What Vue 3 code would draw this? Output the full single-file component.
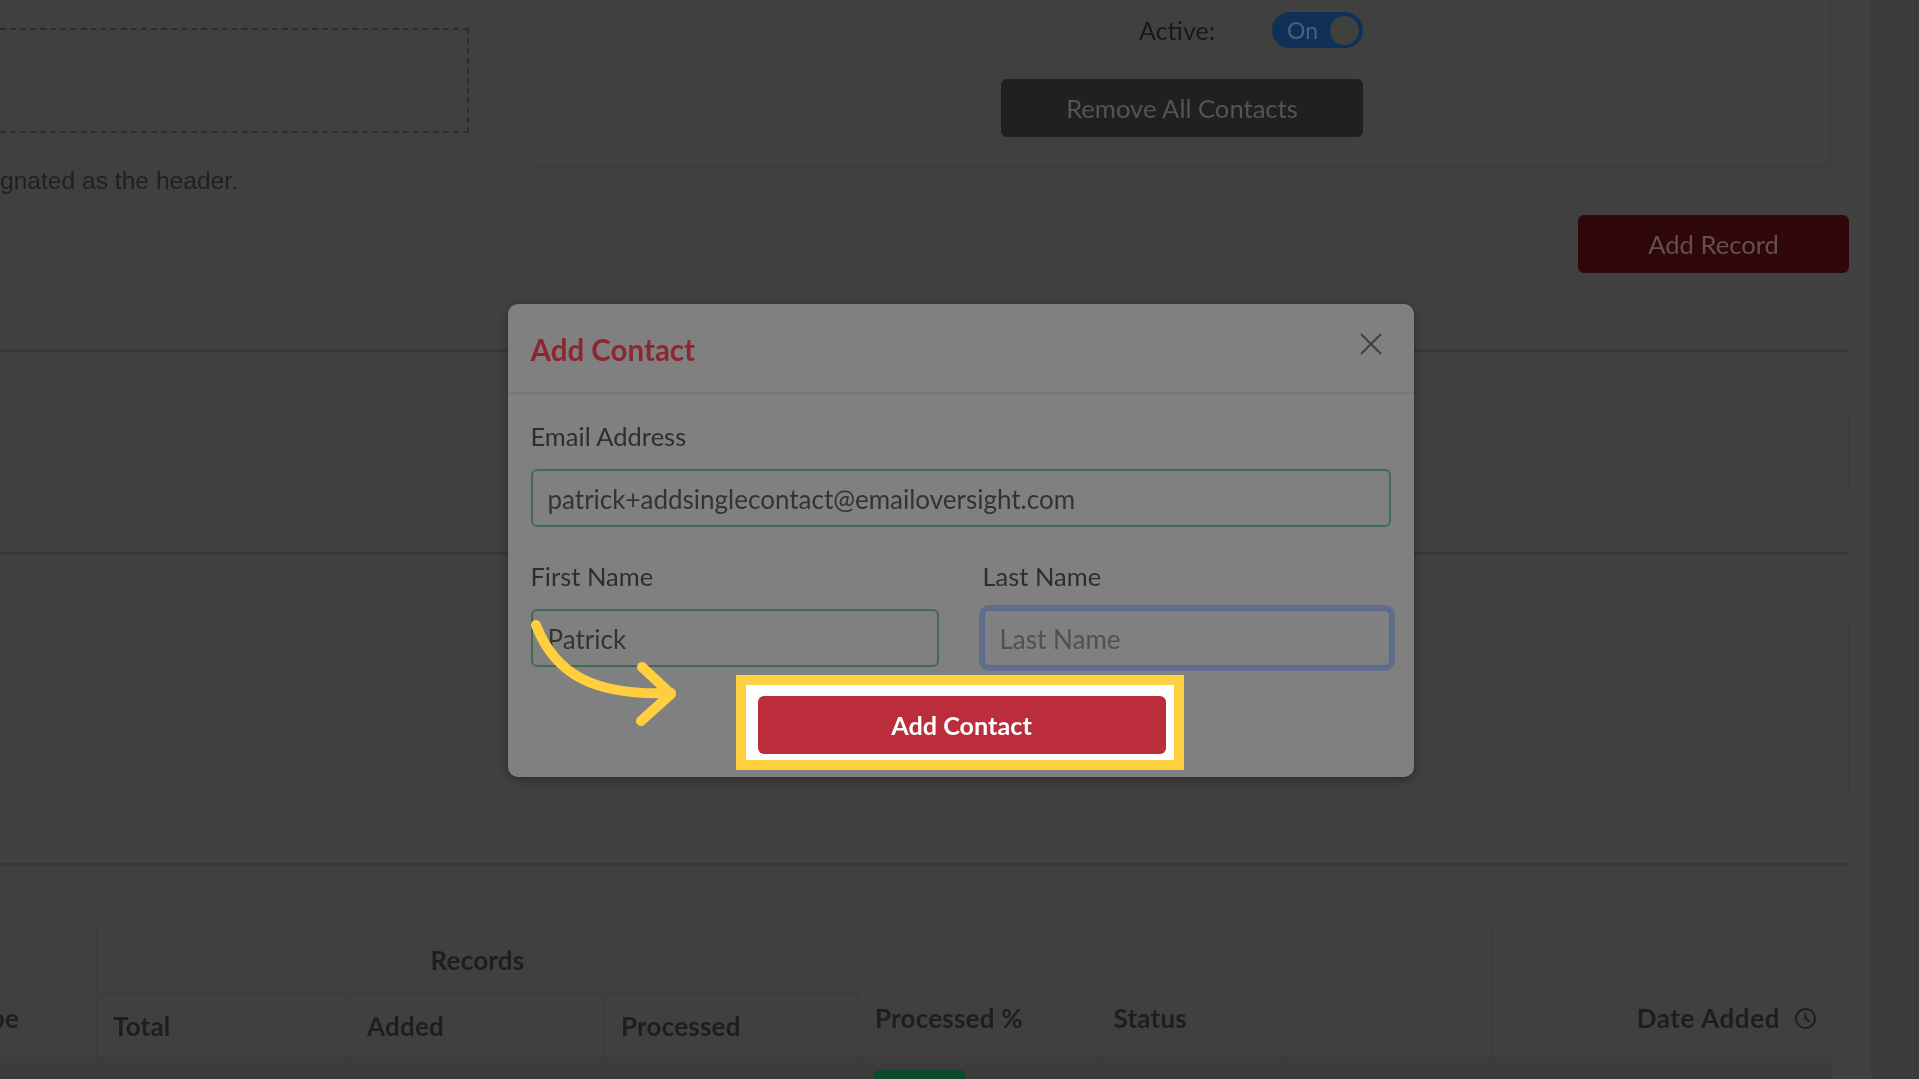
<script setup>
const subHeads = [
  { label: 'Total', col: 'c2' },
  { label: 'Added', col: 'c3' },
  { label: 'Processed', col: 'c4' },
]
</script>

<template>
  <div class="app">
    <div class="main soft">
      <section class="top">
        <div class="left">
          <div class="drop"></div>
          <p class="hint">gnated as the header.</p>
        </div>
        <div class="outer">
          <div class="inner">
            <div class="active">
              <span class="active-label">Active:</span>
              <span class="toggle"><span>On</span><i></i></span>
            </div>
            <button class="remove">Remove All Contacts</button>
          </div>
        </div>
      </section>
      <div class="actions"><button class="add-record">Add Record</button></div>
      <hr class="rule first" />
      <div class="box short"></div>
      <hr class="rule second" />
      <div class="box tall"></div>
      <hr class="rule third" />
      <div class="thead">
        <div class="th span c1 type">pe</div>
        <div class="th records">Records</div>
        <div v-for="h in subHeads" :key="h.label" class="th sub" :class="h.col">{{ h.label }}</div>
        <div class="th span c5">Processed %</div>
        <div class="th span c6">Status</div>
        <div class="th span c7"></div>
        <div class="th span c8 date">
          Date Added
          <svg class="clock" viewBox="0 0 24 24" width="23" height="23" fill="none" stroke="#1c1e20" stroke-width="2">
            <circle cx="12" cy="12" r="10" />
            <path d="M12 6v6l4 3" />
          </svg>
        </div>
      </div>
      <div class="row"><span class="badge"></span></div>
    </div>
    <aside class="strip"></aside>

    <div class="overlay">
      <div class="modal">
        <header class="modal-head soft">
          <h2>Add Contact</h2>
          <svg class="close" viewBox="0 0 24 24" width="24" height="24" fill="none" stroke="#404040" stroke-width="2">
            <path d="M2 2l20 20M22 2L2 22" />
          </svg>
        </header>
        <div class="modal-body soft">
          <label class="field">
            <span>Email Address</span>
            <div class="input ok">patrick+addsinglecontact@emailoversight.com</div>
          </label>
          <div class="two">
            <label class="field">
              <span>First Name</span>
              <div class="input ok">Patrick</div>
            </label>
            <label class="field">
              <span>Last Name</span>
              <div class="input focus">Last Name</div>
            </label>
          </div>
        </div>
        <div class="frame">
          <button class="submit soft">Add Contact</button>
        </div>
      </div>
      <svg class="arrow" viewBox="0 0 300 200" width="300" height="200" fill="none" stroke="#ffcf3f" stroke-width="10" stroke-linecap="round" stroke-linejoin="round">
        <path d="M26 35C45 85 85 106 161 103" />
        <path d="M132 77L161 104L131 131" />
      </svg>
    </div>
  </div>
</template>

<style scoped>
.app {
  position: relative;
  display: flex;
  width: 1919px;
  height: 1079px;
  overflow: hidden;
  background: #404040;
  font-family: Lato, "Noto Sans", sans-serif;
  color: #1c1e20;
}
.soft { filter: blur(0.6px); }
.main { width: 1849px; flex: none; margin-right: 22px; }
.strip { flex: 1; background: #3b3b3b; }

.top { display: flex; height: 185px; }
.left { width: 514px; flex: none; padding-top: 28px; box-sizing: border-box; }
.drop {
  width: 469px;
  height: 105px;
  box-sizing: border-box;
  border: 2px dashed #2d2d2d;
  border-left: none;
}
.hint {
  width: 237px;
  margin: 33px 0 0;
  font: 24.6px/30px "Liberation Sans", sans-serif;
  white-space: nowrap;
  text-align: right;
  color: #202020;
}
.outer {
  flex: 1;
  box-sizing: border-box;
  padding: 0 16px 17px 17px;
  border: 1px solid #3c3c3c;
  border-top: none;
  border-radius: 0 0 6px 6px;
}
.inner {
  height: 168px;
  box-sizing: border-box;
  padding: 12px 467px 0 0;
  display: flex;
  flex-direction: column;
  align-items: flex-end;
  border: 2px solid #3b3e3c;
  border-top: none;
  border-radius: 0 0 6px 6px;
}
.active { display: flex; align-items: center; gap: 57px; }
.active-label { font-size: 25px; color: #16181a; }
.toggle {
  display: flex;
  align-items: center;
  justify-content: space-between;
  box-sizing: border-box;
  width: 91px;
  height: 36px;
  padding: 0 4px 0 15px;
  border-radius: 18px;
  background: #0f3158;
  font-size: 23px;
  color: #4a5f78;
}
.toggle i { width: 29px; height: 29px; border-radius: 50%; background: #404040; }
.remove, .add-record, .submit {
  border: none;
  font-family: inherit;
  font-size: 25.6px;
  border-radius: 6px;
}
.remove {
  width: 362px;
  height: 58px;
  margin-top: 31px;
  background: #1e2022;
  color: #545454;
}
.actions { display: flex; justify-content: flex-end; margin-top: 30px; }
.add-record { width: 271px; height: 58px; background: #300809; color: #645050; }

.rule { height: 3px; margin: 0; border: none; background: #383838; }
.first { margin-top: 76px; }
.second { margin-top: 64px; }
.third { margin-top: 65px; }
.box { box-sizing: border-box; border: 1px solid #3b3b3b; border-left: none; }
.short { height: 73px; margin-top: 63px; }
.tall { height: 180px; margin-top: 63px; }

.thead {
  display: grid;
  grid-template-columns: 97px 254px 254px 254px 238.6px 184.4px 211px 356px;
  grid-template-rows: 68px 62px;
  margin-top: 61px;
  font-size: 26px;
  font-weight: 700;
  letter-spacing: 0.2px;
}
.th { display: flex; align-items: center; padding: 0 16px; border-right: 1px solid #3b3b3b; line-height: 30px; box-sizing: border-box; min-width: 0; }
.span { grid-row: 1 / 3; align-items: flex-end; padding-bottom: 24px; }
.type { justify-content: flex-end; padding: 0 77px 24px 0; white-space: nowrap; }
.records { grid-column: 2 / 5; grid-row: 1; justify-content: center; border-bottom: 2px solid #3c3c3c; }
.sub { grid-row: 2; }
.c1 { grid-column: 1; }
.c2 { grid-column: 2; }
.c3 { grid-column: 3; }
.c4 { grid-column: 4; }
.c5 { grid-column: 5; }
.c6 { grid-column: 6; }
.c7 { grid-column: 7; }
.c8 { grid-column: 8; }
.date { justify-content: flex-end; gap: 14px; padding-right: 32px; border-right: none; white-space: nowrap; letter-spacing: 0.6px; }
.clock { flex: none; margin-bottom: 3px; }
.row { height: 22px; width: 1832px; padding-left: 873px; box-sizing: border-box; background: #3c3c3c; padding-top: 13px; }
.badge { display: block; width: 93px; height: 12px; border-radius: 6px 6px 0 0; background: #0e4a2a; }

.overlay {
  position: absolute;
  inset: 0;
  display: flex;
  align-items: center;
  justify-content: center;
}
.modal {
  width: 906px;
  height: 473px;
  margin: 2px 0 0 2px;
  box-sizing: border-box;
  border-radius: 10px;
  background: #808080;
  box-shadow: 0 3px 10px rgba(0, 0, 0, 0.3);
}
.modal-head {
  display: flex;
  justify-content: space-between;
  height: 90px;
  box-sizing: border-box;
  padding: 0 31px 0 23px;
  border-bottom: 2px solid #767878;
}
.modal-head h2 {
  margin: 0;
  padding-top: 28px;
  font-size: 29.5px;
  line-height: 36px;
  font-weight: 700;
  color: #8d2630;
}
.close { margin-top: 28px; flex: none; }
.modal-body { padding: 27px 23px 0; }
.field { display: block; font-size: 25.5px; color: #2e2e2e; }
.field span { display: block; line-height: 30px; }
.input {
  height: 58px;
  box-sizing: border-box;
  margin-top: 18px;
  padding: 0 15px;
  border: 2px solid #3f6b57;
  border-radius: 6px;
  font-size: 26px;
  line-height: 56px;
  color: #333;
}
.two {
  display: grid;
  grid-template-columns: 408px 408px;
  gap: 44px;
  margin-top: 34px;
}
.focus {
  border-color: #566a92;
  box-shadow: 0 0 0 4px #626e87;
  color: #505050;
}
.frame {
  width: 448px;
  height: 95px;
  box-sizing: border-box;
  margin: 8px 0 0 228px;
  padding: 11px 8px 5px 12px;
  border: 10px solid #ffd03f;
  background: #fff;
}
.submit {
  display: block;
  width: 100%;
  height: 58px;
  padding-bottom: 2px;
  background: #bb2d3b;
  color: #fff;
  font-size: 25.2px;
  font-weight: 700;
}
.arrow { position: absolute; left: 510px; top: 590px; }
</style>

<style>
html, body { margin: 0; overflow: hidden; }
</style>
